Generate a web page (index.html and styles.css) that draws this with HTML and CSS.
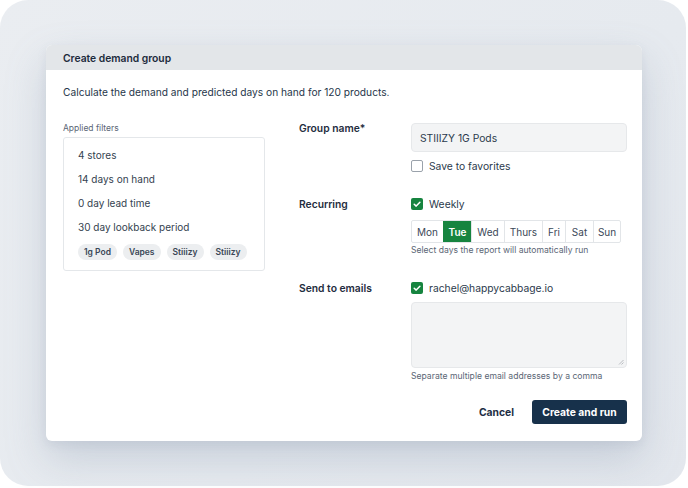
FILE: index.html
```html
<!DOCTYPE html>
<html lang="en">
<head>
<meta charset="utf-8">
<title>Create demand group</title>
<link rel="stylesheet" href="styles.css">
</head>
<body>
<div class="backdrop">
  <div class="modal">
    <div class="modal-header">Create demand group</div>
    <div class="modal-body">
      <p class="intro">Calculate the demand and predicted days on hand for 120 products.</p>
      <div class="columns">
        <div class="filters">
          <div class="small-label">Applied filters</div>
          <div class="filter-box">
            <div class="filter-item">4 stores</div>
            <div class="filter-item">14 days on hand</div>
            <div class="filter-item">0 day lead time</div>
            <div class="filter-item">30 day lookback period</div>
            <div class="tags">
              <span class="tag">1g Pod</span>
              <span class="tag">Vapes</span>
              <span class="tag">Stiiizy</span>
              <span class="tag">Stiiizy</span>
            </div>
          </div>
        </div>
        <div class="form">
          <div class="form-row row-name">
            <div class="row-label">Group name*</div>
            <div class="row-field">
              <div class="text-input">STIIIZY 1G Pods</div>
              <label class="check">
                <span class="box"></span>
                <span>Save to favorites</span>
              </label>
            </div>
          </div>
          <div class="form-row row-recurring">
            <div class="row-label">Recurring</div>
            <div class="row-field">
              <label class="check">
                <span class="box checked"><svg viewBox="0 0 12 12" width="12" height="12"><path d="M3.2 6.2 L5.2 8.1 L8.9 4.2" fill="none" stroke="#fff" stroke-width="1.5" stroke-linecap="round" stroke-linejoin="round"/></svg></span>
                <span>Weekly</span>
              </label>
              <div class="days">
                <span class="day">Mon</span>
                <span class="day active">Tue</span>
                <span class="day">Wed</span>
                <span class="day">Thurs</span>
                <span class="day">Fri</span>
                <span class="day">Sat</span>
                <span class="day">Sun</span>
              </div>
              <div class="help help-days">Select days the report will automatically run</div>
            </div>
          </div>
          <div class="form-row row-emails">
            <div class="row-label">Send to emails</div>
            <div class="row-field">
              <label class="check">
                <span class="box checked"><svg viewBox="0 0 12 12" width="12" height="12"><path d="M3.2 6.2 L5.2 8.1 L8.9 4.2" fill="none" stroke="#fff" stroke-width="1.5" stroke-linecap="round" stroke-linejoin="round"/></svg></span>
                <span>rachel@happycabbage.io</span>
              </label>
              <div class="textarea"><span class="grip"><svg viewBox="0 0 6 6" width="6" height="6"><path d="M1 5.5 L5.5 1 M3.5 5.5 L5.5 3.5" stroke="#a9adb2" stroke-width="0.8"/></svg></span></div>
              <div class="help help-email">Separate multiple email addresses by a comma</div>
            </div>
          </div>
          <div class="actions">
            <span class="btn-link">Cancel</span>
            <span class="btn-primary">Create and run</span>
          </div>
        </div>
      </div>
    </div>
  </div>
</div>
</body>
</html>
```

FILE: styles.css
```css
* { box-sizing: border-box; }
html, body { margin: 0; padding: 0; background: #ffffff; }
body {
  font-family: "Inter", "Lato", sans-serif;
  color: #2b3a4c;
  width: 688px;
  height: 488px;
  overflow: hidden;
}
.backdrop {
  width: 686px;
  height: 486px;
  border-radius: 28px;
  background: linear-gradient(135deg, #eaedf1 0%, #e6eaef 60%, #e3e7ed 100%);
  padding: 45px 0 0 46px;
}
.modal {
  width: 596px;
  height: 396px;
  background: #ffffff;
  border-radius: 6px;
  overflow: hidden;
  box-shadow: 0 18px 40px rgba(120, 135, 160, 0.28), 0 4px 10px rgba(120, 135, 160, 0.12);
}
.modal-header {
  height: 25px;
  background: #e3e6e9;
  padding-left: 17px;
  display: flex;
  align-items: center;
  font-size: 10.3px;
  font-weight: 600;
  color: #1d2b3c;
}
.modal-body {
  padding: 16px 15px 0 17px;
}
.intro {
  margin: 0;
  font-size: 10.2px;
  line-height: 13px;
  color: #26364a;
}
.columns {
  display: flex;
  gap: 34px;
  margin-top: 15px;
}
.filters { width: 202px; padding-top: 9px; }
.small-label {
  font-size: 8.5px;
  line-height: 10px;
  color: #5a6676;
}
.filter-box {
  margin-top: 4px;
  border: 1px solid #e4e7ea;
  border-radius: 3px;
  height: 134px;
  padding: 11px 0 0 14px;
}
.filter-item {
  font-size: 10px;
  line-height: 13px;
  color: #34424f;
  margin-bottom: 11px;
}
.tags { display: flex; gap: 6px; margin-top: -1px; }
.tag {
  background: #eceef0;
  border-radius: 8px;
  font-size: 8.5px;
  font-weight: 600;
  line-height: 16px;
  padding: 0 6px;
  color: #3a4756;
}
.form { flex: none; width: 328px; padding-top: 8px; }
.form-row {
  display: flex;
}
.row-label {
  width: 112px;
  font-size: 10.3px;
  font-weight: 600;
  color: #1f2d3e;
  line-height: 13px;
}
.row-field { width: 216px; }
.text-input {
  height: 29px;
  background: #f3f4f5;
  border: 1px solid #e6e8ea;
  border-radius: 4px;
  font-size: 10.3px;
  color: #2b3a4c;
  padding-left: 8px;
  display: flex;
  align-items: center;
  margin-top: 1px;
}
.check {
  display: flex;
  align-items: center;
  gap: 6px;
  font-size: 10.3px;
  line-height: 14px;
  color: #2b3a4c;
}
.row-name .check { margin-top: 7px; }
.box {
  width: 12px;
  height: 12px;
  border: 1px solid #9aa2ab;
  border-radius: 2px;
  background: #fff;
  display: flex;
}
.box.checked {
  border: none;
  background: #16843f;
}
.row-recurring { margin-top: 24px; }
.row-recurring .row-label { padding-top: 1px; }
.days {
  display: flex;
  margin-top: 9px;
  border: 1px solid #e2e5e8;
  border-radius: 2px;
  width: 210px;
  height: 23px;
}
.day {
  display: flex;
  align-items: center;
  justify-content: center;
  font-size: 10px;
  color: #3b4858;
  border-left: 1px solid #e2e5e8;
}
.day:first-child { border-left: none; }
.day:nth-child(1) { width: 31px; }
.day:nth-child(2) { width: 28px; }
.day:nth-child(3) { width: 33px; }
.day:nth-child(4) { width: 38px; }
.day:nth-child(5) { width: 23px; }
.day:nth-child(6) { width: 28px; }
.day:nth-child(7) { width: 27px; }
.day.active {
  background: #16843f;
  color: #ffffff;
  font-weight: 600;
  border-left-color: #16843f;
}
.help {
  font-size: 8.6px;
  line-height: 11px;
  color: #5b6675;
}
.help-days { margin-top: 2px; }
.help-email { margin-top: 3px; }
.row-emails { margin-top: 25px; }
.row-emails .row-label { padding-top: 1px; }
.textarea {
  margin-top: 7px;
  height: 66px;
  background: #f3f4f5;
  border: 1px solid #e6e8ea;
  border-radius: 4px;
  position: relative;
}
.grip { position: absolute; right: 2px; bottom: 2px; display: flex; }
.actions {
  display: flex;
  justify-content: flex-end;
  align-items: center;
  gap: 18px;
  margin-top: 18px;
}
.btn-link {
  font-size: 10.3px;
  font-weight: 700;
  color: #1d2e44;
}
.btn-primary {
  background: #17314b;
  color: #ffffff;
  font-size: 10.3px;
  font-weight: 700;
  height: 24px;
  width: 95px;
  border-radius: 3px;
  display: flex;
  align-items: center;
  justify-content: center;
}
```
